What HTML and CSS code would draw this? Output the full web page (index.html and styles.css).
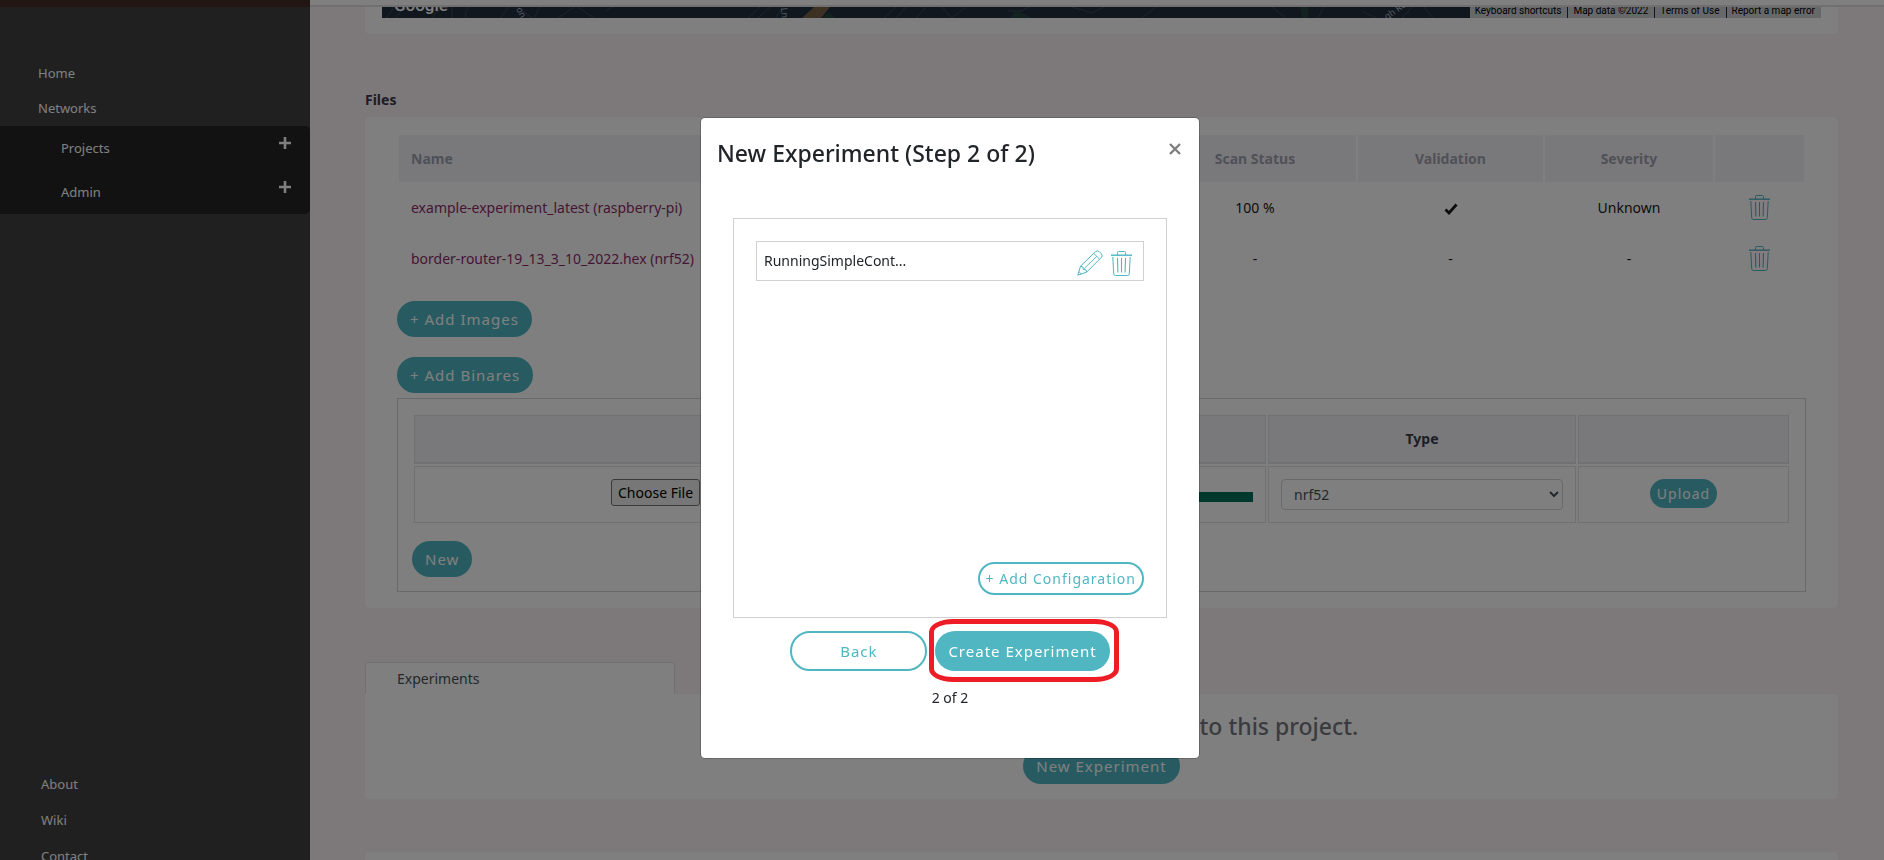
FILE: index.html
```html
<!DOCTYPE html>
<html lang="en">
<head>
<meta charset="utf-8">
<title>New Experiment</title>
<link rel="stylesheet" href="styles.css">
</head>
<body>
<svg width="0" height="0" class="sprite" aria-hidden="true">
  <symbol id="trash" viewBox="0 0 21 25">
    <g fill="none" stroke="currentColor">
      <path d="M6.500 4V1.600q0-1.100 1.100-1.100h5.800q1.100 0 1.100 1.100V4"/>
      <path d="M0 4.200h21" stroke-width="1.400"/>
      <path d="M1.800 6l.9 16.700q.1 1.800 1.800 1.800h12q1.700 0 1.800-1.800L19.200 6"/>
      <path d="M6.500 7l.4 14.500M10.500 7v14.500M14.500 7l-.4 14.500" stroke-width="1.100"/>
    </g>
  </symbol>
  <symbol id="pencil" viewBox="0 0 26 26">
    <g fill="none" stroke="currentColor" stroke-linejoin="round">
      <path d="M.8 25.200L3.500 16.200 18.600 1.600q1.800-1.500 3.600 0l2.200 2.200q1.500 1.800 0 3.600L9.600 22.200z"/>
      <path d="M16.800 3.400l5.800 5.800M3.500 16.200l2.200.6.6 2.600 2.700.6.600 2.200M1.900 21.600l2.500 2.500"/>
      <path d="M6.300 19.400L19.800 6.300" stroke-width=".9"/>
    </g>
  </symbol>
  <symbol id="plus" viewBox="0 0 12 12"><path d="M6 0v12M0 6h12" stroke="currentColor" stroke-width="2.600"/></symbol>
</svg>

<div class="app">
  <aside class="sidebar">
    <nav class="nav">
      <a class="nav-link" href="#home">Home</a>
      <a class="nav-link" href="#networks">Networks</a>
      <div class="nav-group">
        <div class="nav-row"><a href="#projects">Projects</a><button class="plain" aria-label="Expand projects"><svg class="plus"><use href="#plus"/></svg></button></div>
        <div class="nav-row"><a href="#admin">Admin</a><button class="plain" aria-label="Expand admin"><svg class="plus"><use href="#plus"/></svg></button></div>
      </div>
    </nav>
    <nav class="nav-footer">
      <a href="#about">About</a>
      <a href="#wiki">Wiki</a>
      <a href="#contact">Contact</a>
    </nav>
  </aside>

  <div class="page">
    <header class="topbar"></header>
    <main class="content">
      <section class="card map-card">
        <div class="map">
          <svg class="map-roads" aria-hidden="true">
            <g fill="none" stroke="#3c4a5e" stroke-width="1">
              <path d="M4 11L12 0M14 11L22 0M50 11q3-6 12-11M70 11V0M84 11q-2-6 3-11M118 11l9-11M136 0l14 11M152 11l6-11M176 11l16-11M196 0l16 11M224 4l6-4M366 11l12-11M376 11l12-11M394 11l6-11M502 11l12-11M514 11l10-11M534 11l10-11M560 0l10 11 14-11M626 4h14l6-4M690 0l20 6 12-6M760 11l14-11M890 0l14 11M936 11l6-11M980 4l14 7M1020 11l10-11M1042 0l9 11M1092 11q6-9 18-11M1108 11l-4-11"/>
            </g>
            <path d="M420 11l12-11h16l-9 11z" fill="#7a6248"/>
            <path d="M440 11l6-6 8 6zM628 11l6-8 16 8zM918 0h8v11h-6z" fill="#24453f"/>
            <g fill="#aeb8c4" font-size="9">
              <text transform="translate(134 2) rotate(62)">on</text>
              <text transform="translate(399 1) rotate(85)">Ln</text>
              <text transform="translate(1005 13) rotate(-35)">gh Ro</text>
            </g>
          </svg>
          <span class="map-logo">Google</span>
          <div class="map-legal">
            <a href="#keys">Keyboard shortcuts</a><span>Map data ©2022</span><a href="#terms">Terms of Use</a><a href="#report">Report a map error</a>
          </div>
        </div>
      </section>

      <h2 class="section-title">Files</h2>
      <section class="card files">
        <table class="file-table">
          <colgroup><col><col class="f-scan"><col class="f-valid"><col class="f-sev"><col class="f-action"></colgroup>
          <thead><tr><th>Name</th><th>Scan Status</th><th>Validation</th><th>Severity</th><th></th></tr></thead>
          <tbody>
            <tr><td><a href="#f1">example-experiment_latest (raspberry-pi)</a></td><td>100 %</td>
              <td><svg class="check" viewBox="0 0 14 12" role="img" aria-label="Valid"><path d="M1.500 6.500L5 10 12.500 1.500" fill="none" stroke="currentColor" stroke-width="2.800"/></svg></td>
              <td>Unknown</td><td><button class="plain teal" aria-label="Delete"><svg class="trash"><use href="#trash"/></svg></button></td></tr>
            <tr><td><a href="#f2">border-router-19_13_3_10_2022.hex (nrf52)</a></td><td>-</td><td>-</td><td>-</td>
              <td><button class="plain teal" aria-label="Delete"><svg class="trash"><use href="#trash"/></svg></button></td></tr>
          </tbody>
        </table>
        <button class="btn add-images">+ Add Images</button>
        <button class="btn add-binaries">+ Add Binares</button>
        <div class="upload">
          <table class="upload-table">
            <colgroup><col><col class="u-progress"><col class="u-type"><col class="u-action"></colgroup>
            <thead><tr><th></th><th></th><th>Type</th><th></th></tr></thead>
            <tbody><tr>
              <td><input class="file-input" type="file" aria-label="Binary file"></td>
              <td><div class="progress"></div></td>
              <td><select class="select" aria-label="Type"><option>nrf52</option></select></td>
              <td><button class="btn btn-small">Upload</button></td>
            </tr></tbody>
          </table>
          <button class="btn">New</button>
        </div>
      </section>

      <div class="tab"><a href="#experiments">Experiments</a></div>
      <section class="card experiments">
        <h3>There are no experiments listed to this project.</h3>
        <button class="btn">New Experiment</button>
      </section>
      <section class="card next-card"></section>
    </main>
  </div>
</div>

<div class="backdrop">
  <div class="modal" role="dialog" aria-modal="true" aria-labelledby="modal-title">
    <div class="modal-head">
      <h1 id="modal-title">New Experiment (Step 2 of 2)</h1>
      <button class="plain close" aria-label="Close"><svg viewBox="0 0 12 12"><path d="M1 1l10 10M11 1L1 11" stroke="currentColor" stroke-width="2.400"/></svg></button>
    </div>
    <div class="config-box">
      <div class="config-item">
        <span>RunningSimpleCont...</span>
        <div class="config-actions">
          <button class="plain teal" aria-label="Edit"><svg class="pencil"><use href="#pencil"/></svg></button>
          <button class="plain teal" aria-label="Delete"><svg class="trash"><use href="#trash"/></svg></button>
        </div>
      </div>
      <button class="btn btn-outline add-config">+ Add Configaration</button>
    </div>
    <div class="modal-actions">
      <button class="btn btn-outline btn-large back">Back</button>
      <div class="highlighted"><button class="btn btn-large">Create Experiment</button><span class="marker"></span></div>
    </div>
    <p class="step">2 of 2</p>
  </div>
</div>
</body>
</html>
```
FILE: styles.css
```css
* { box-sizing: border-box; }
body {
  margin: 0;
  font: 14px/20px "Noto Sans", "Open Sans", sans-serif;
  color: #212529;
}
a { color: inherit; text-decoration: none; }
h1, h2, h3, p { margin: 0; }
button, select, input { font: inherit; }
.sprite { position: absolute; }
.plain { border: 0; padding: 0; background: none; color: inherit; }
.plain svg { display: block; }
.teal { color: #4fb6c2; }
.trash { width: 21px; height: 25px; }
.pencil { width: 26px; height: 26px; }
.plus { width: 12px; height: 12px; }

.app { display: flex; height: 100vh; overflow: hidden; }

.sidebar {
  display: flex;
  flex-direction: column;
  flex: 0 0 310px;
  border-top: 7px solid #442c2a;
  padding-top: 49px;
  background: #404040;
  color: #fff;
  font-size: 13px;
}
.nav-link { display: block; padding-left: 38px; line-height: 35px; }
.nav-group { background: #242424; border-radius: 0 5px 5px 0; }
.nav-row {
  display: flex;
  justify-content: space-between;
  align-items: center;
  padding: 0 19px 0 61px;
  line-height: 44px;
}
.nav-row button { padding-bottom: 10px; }
.nav-footer { margin: auto 0 -14px; padding-left: 41px; }
.nav-footer a { display: block; line-height: 36px; }

.page { flex: 1; min-width: 0; background: #faf3f4; }
.topbar { height: 7px; background: #fff; border-bottom: 2px solid #e2dede; }
.content { padding: 0 46px 0 55px; }
.card { background: #fff; border-radius: 5px; }

.map-card { padding: 0 17px 16px; border-radius: 0 0 5px 5px; }
.map {
  position: relative;
  display: flex;
  justify-content: space-between;
  align-items: flex-end;
  height: 11px;
  overflow: hidden;
  background: #222e3f;
}
.map-roads { position: absolute; inset: 0; width: 100%; height: 100%; }
.map-logo {
  position: relative;
  padding-left: 12px;
  font: 500 17px/26px Roboto, sans-serif;
  color: #fff;
}
.map-legal {
  position: relative;
  display: flex;
  font: 10px/14px Roboto, sans-serif;
  color: #000;
}
.map-legal > * { padding: 0 6px 0 5px; background: #cfd1d4; }
.map-legal > * + * { border-left: 1px solid #222e3f; }

.section-title {
  margin: 54px 0 5px;
  font-size: 14px;
  line-height: 24px;
  font-weight: 700;
  color: #3a3850;
}

.files { display: flex; flex-direction: column; align-items: flex-start; padding: 18px 32px 16px; }
.file-table {
  align-self: stretch;
  margin: 0 2px;
  table-layout: fixed;
  border-collapse: collapse;
  text-align: center;
}
.f-scan { width: 204px; }
.f-valid { width: 187px; }
.f-sev { width: 170px; }
.f-action { width: 90px; }
.file-table th {
  height: 47px;
  padding: 0 12px;
  border-right: 2px solid #fff;
  background: #f3f3f7;
  color: #a0a2b0;
}
.file-table th:last-child { border-right: 0; }
.file-table td { height: 51px; padding: 0 12px; color: #18181c; }
.file-table tr > :first-child { text-align: left; }
.file-table td a { color: #8b2d68; }
.file-table td .plain { display: inline-block; vertical-align: middle; }
.check { width: 14px; height: 12px; vertical-align: middle; }

.btn {
  height: 36px;
  border: 0;
  border-radius: 20px;
  padding: 0 13px;
  background: #50b7c2;
  color: #fff;
  font-size: 15px;
  letter-spacing: 1px;
  white-space: nowrap;
}
.btn-small { height: 29px; padding: 0 7px; font-size: 14px; }
.btn-large { height: 40px; }
.btn-outline { border: 2px solid #50b7c2; background: #fff; color: #50b7c2; }

.add-images { margin: 17px 0 20px; }
.upload { align-self: stretch; margin-top: 5px; padding: 14px; border: 1px solid #d2d2d2; }
.upload-table {
  width: 100%;
  margin-bottom: 16px;
  table-layout: fixed;
  border-spacing: 2px;
  text-align: center;
}
.u-progress { width: 278px; }
.u-type { width: 308px; }
.u-action { width: 211px; }
.upload-table th, .upload-table td { border: 1px solid #dee2e6; padding: 0 12px; }
.upload-table th { height: 49px; border-bottom-width: 2px; background: #f3f3f7; color: #3c3c46; }
.upload-table td { height: 57px; padding: 12px; vertical-align: top; }
.file-input { width: 178px; }
.file-input::file-selector-button {
  height: 27px;
  border: 1px solid #767676;
  border-radius: 3px;
  background: #efefef;
  color: #000;
  font: inherit;
}
.progress { height: 10px; margin-top: 13px; background: #00705c; }
.select {
  display: block;
  width: 100%;
  height: 31px;
  padding: 0 8px;
  border: 1px solid #ced4da;
  border-radius: 4px;
  background: #fff;
  color: #495057;
}

.tab {
  width: 310px;
  margin-top: 54px;
  padding: 6px 31px 5px;
  border: 1px solid #dee2e6;
  border-bottom: 0;
  border-radius: 5px 5px 0 0;
  background: #fff;
  color: #495057;
}
.experiments { padding: 14px 0 15px; border-top-left-radius: 0; text-align: center; }
.experiments h3 { margin-bottom: 4px; font-size: 23px; line-height: 36px; font-weight: 500; color: #74777f; }
.experiments .btn { display: block; margin: 0 auto; }
.next-card { height: 80px; margin-top: 53px; }

.backdrop {
  position: fixed;
  inset: 0;
  display: flex;
  justify-content: center;
  align-items: flex-start;
  padding: 117px 0 0 16px;
  background: rgba(0, 0, 0, .5);
}
.modal {
  width: 500px;
  padding: 17px 16px 50px;
  border: 1px solid rgba(0, 0, 0, .2);
  border-radius: 5px;
  background: #fff;
  background-clip: padding-box;
}
.modal-head { display: flex; justify-content: space-between; align-items: flex-start; margin-bottom: 47px; }
.modal-head h1 { font-size: 23px; line-height: 36px; font-weight: 500; }
.close { padding: 8px 2px; color: #7f7f7f; }
.close svg { width: 12px; height: 12px; }
.config-box {
  display: flex;
  flex-direction: column;
  justify-content: space-between;
  min-height: 400px;
  margin: 0 16px;
  padding: 22px;
  border: 1px solid #d0d0d0;
}
.config-item {
  display: flex;
  justify-content: space-between;
  align-items: center;
  height: 40px;
  padding: 0 11px 0 7px;
  border: 1px solid #d0d0d0;
}
.config-actions { display: flex; gap: 8px; align-items: center; padding-top: 4px; }
.add-config { align-self: flex-end; height: 33px; padding: 0 6px; font-size: 14px; }
.modal-actions { display: flex; justify-content: center; gap: 8px; margin-top: 13px; }
.back { width: 137px; }
.highlighted { position: relative; }
.marker {
  position: absolute;
  inset: -12px -9px -11px -6px;
  border: 5px solid #ee1c24;
  border-radius: 24px / 13px;
  pointer-events: none;
}
.step { margin-top: 17px; text-align: center; }
```
